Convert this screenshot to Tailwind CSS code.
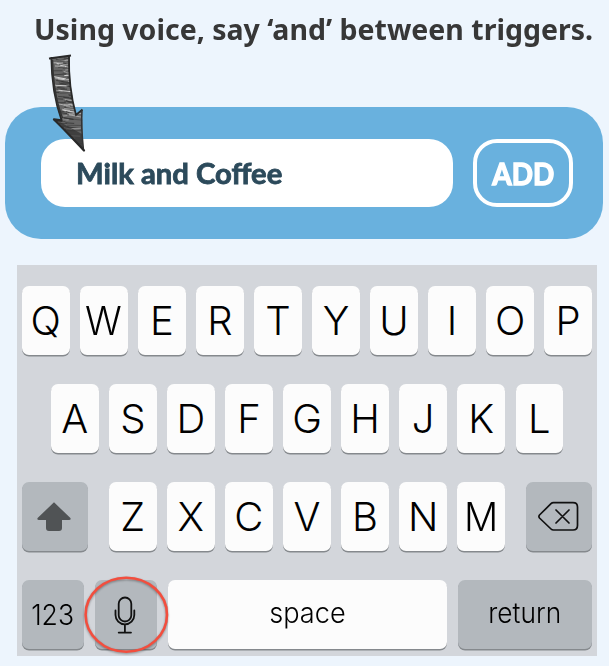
<!DOCTYPE html>
<html lang="en">
<head>
<meta charset="utf-8">
<title>Add triggers</title>
<script src="https://cdn.jsdelivr.net/npm/@tailwindcss/browser@4"></script>
</head>
<body class="relative w-[609px] h-[666px] overflow-hidden bg-[#edf5fd] font-['Inter',sans-serif]">
<h1 class="h-[107px] pt-[9px] pl-[34px] text-[28px] leading-10 font-bold text-[#373737] whitespace-nowrap font-['Noto_Sans',sans-serif]"><span class="inline-block origin-left scale-x-[1.018]">Using voice, say ‘and’ between triggers.</span></h1>

<section class="ml-[5px] w-[598px] h-[132px] rounded-[36px] bg-[#69b1de] pt-8 pl-9 flex gap-5 items-start font-['Lato',sans-serif]">
  <div class="w-[412px] h-[68px] rounded-[24px] bg-white pl-[35px] flex items-center text-[28px] font-bold text-[#2c4a5b] whitespace-nowrap"><span class="inline-block origin-left scale-x-[1.045] [-webkit-text-stroke:0.8px_#2c4a5b] [stroke-linejoin:round]">Milk and Coffee</span></div>
  <button class="w-[100px] h-[68px] rounded-[24px] border-4 border-white text-white text-[30px] font-bold flex items-center justify-center"><span class="inline-block scale-x-[0.93] [-webkit-text-stroke:1.4px_#fff]">ADD</span></button>
</section>

<main class="mt-[26px] ml-[17px] w-[580px] h-[391px] bg-[#d3d6db] pt-[21px] px-[5px] text-[40px] font-light text-black">
  <div class="flex justify-between h-[98px]" data-row="QWERTYUIOP"></div>
  <div class="flex justify-between h-[98px] pl-[29px] pr-[29px]" data-row="ASDFGHJKL"></div>
  <div class="flex justify-between h-[98px]">
    <div class="w-[66px] h-[69px] rounded-[7px] bg-[#b3b8bd] shadow-[0_1.5px_0_#85898d] flex items-center justify-center">
      <svg width="66" height="69" viewBox="0 0 66 69"><path d="M32 20.3 48.4 36Q49.3 38 47 38H40V46Q40 49 37 49H27Q24 49 24 46V38H17Q14.700 38 15.600 36Z" fill="#505355"/></svg>
    </div>
    <div class="w-[396px] flex justify-between" data-row="ZXCVBNM"></div>
    <div class="w-[66px] h-[69px] rounded-[7px] bg-[#b3b8bd] shadow-[0_1.5px_0_#85898d]">
      <svg width="66" height="69" viewBox="0 0 66 69" fill="none" stroke="#111" stroke-width="1.7" stroke-linecap="round" stroke-linejoin="round"><path d="M27.500 20.700H47Q51.500 20.700 51.500 25V43.500Q51.500 48 47 48H27.500Q26 48 25 47L13.500 36Q12.300 34.500 13.500 33L25 21.700Q26 20.700 27.500 20.700ZM30 28 43 41M43 28 30 41"/></svg>
    </div>
  </div>
  <div class="flex text-[28px]">
    <div class="w-[62px] h-[69px] rounded-[7px] bg-[#b3b8bd] shadow-[0_1.5px_0_#85898d] flex items-center justify-center"><span class="inline-block scale-x-[0.95]">123</span></div>
    <div class="ml-[11px] w-[62px] h-[69px] rounded-[7px] bg-[#b3b8bd] shadow-[0_1.5px_0_#85898d]">
      <svg width="62" height="69" viewBox="0 0 62 69" fill="none" stroke="#111" stroke-width="1.8" stroke-linecap="round"><rect x="23.700" y="17.500" width="12.600" height="24" rx="6.300"/><path d="M20.500 30.500V35A9.400 9.400 0 0 0 39.300 35V30.500M29.900 44.500V52.300M23.700 52.600H36"/></svg>
    </div>
    <div class="ml-[10.500px] w-[279.500px] h-[69px] rounded-[7px] bg-[#fcfcfc] shadow-[0_1.5px_0_#85898d] flex items-center justify-center pb-[3px]"><span class="inline-block scale-x-[0.97]">space</span></div>
    <div class="ml-[10.500px] w-[134px] h-[69px] rounded-[7px] bg-[#b3b8bd] shadow-[0_1.5px_0_#85898d] flex items-center justify-center pb-[3px]"><span class="inline-block scale-x-[0.94]">return</span></div>
  </div>
</main>

<!-- Hand-drawn arrow pointing at the field -->
<svg class="absolute left-0 top-0 pointer-events-none" width="170" height="160" viewBox="0 0 170 160" fill="none">
  <defs><clipPath id="ac"><path d="M51 58 69.500 56C69 75 71 95 76 114L82 109.500 83 150 54.500 120 61 120C54 97 52 78 51 58Z"/></clipPath></defs>
  <path d="M51 58 69.500 56C69 75 71 95 76 114L82 109.500 83 150 54.500 120 61 120C54 97 52 78 51 58Z" fill="#666"/>
  <g id="hatch" clip-path="url(#ac)"></g>
  <path d="M58 121 82 134 83 150Z" fill="#333" opacity=".75"/>
  <path d="M49 58.500 71 55.500M51.300 57C51.500 78 54 99 61.500 120M69 55C68.500 77 71 97 76 115L82.500 109.500" stroke="#292929" stroke-width="1.800"/>
  <path d="M52.500 60C53 79 55 99 62.500 118M82 110C81 124 82 136 83.500 150" stroke="#333" stroke-width="1.500"/>
  <path d="M54 119.500 61.500 120.500M54 119.500C64 129 74 140 84 150.500" stroke="#292929" stroke-width="2.300" stroke-linecap="round"/>
</svg>

<svg class="absolute left-[82px] top-[573px] drop-shadow-[0_1px_1px_rgba(0,0,0,0.35)] pointer-events-none" width="90" height="84" viewBox="0 0 90 84"><ellipse cx="44.300" cy="41.700" rx="40.700" ry="37" fill="none" stroke="#f24e3e" stroke-width="2.600"/></svg>

<script>
document.querySelectorAll('[data-row]').forEach(row => {
  for (const ch of row.dataset.row) {
    const key = document.createElement('div');
    key.className = 'w-[47.5px] h-[69px] shrink-0 rounded-[7px] bg-[#fcfcfc] shadow-[0_1.5px_0_#85898d] flex items-center justify-center';
    const label = document.createElement('span');
    label.className = ch === 'W' || ch === 'M' ? 'inline-block scale-x-[0.95]' : 'inline-block';
    label.textContent = ch;
    key.append(label);
    row.append(key);
  }
});
let seed = 7;
const rnd = () => (seed = seed * 16807 % 2147483647) / 2147483647;
let lines = '';
for (let y = 54; y < 152; y += 0.8) {
  const x = 50 + rnd() * 20, end = x + 5 + rnd() * 12;
  lines += `<path d="M${x} ${y}L${end} ${y + rnd() * 4 - 1}" stroke="${rnd() > .4 ? '#333' : '#e8e8e8'}" stroke-width="${.4 + rnd() * .5}"/>`;
}
document.getElementById('hatch').innerHTML = lines;
</script>
</body>
</html>
